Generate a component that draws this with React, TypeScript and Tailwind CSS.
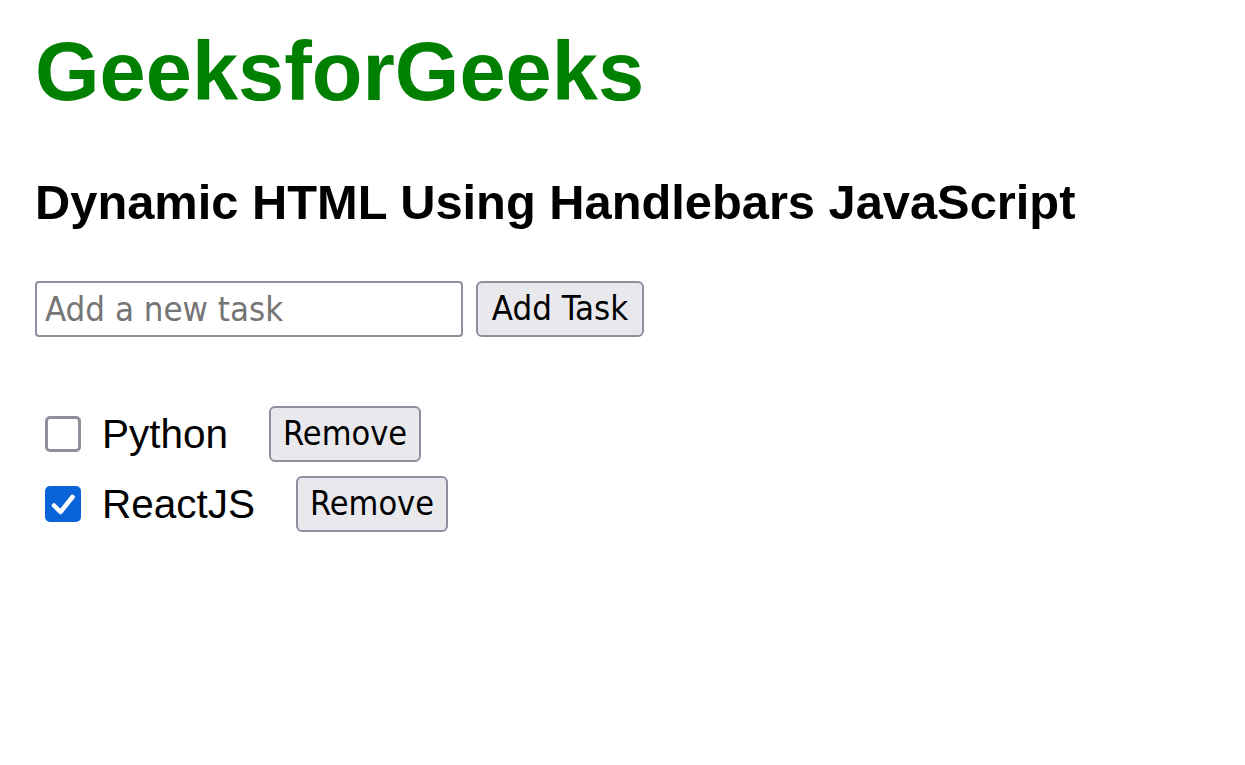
import { useState } from "react";

type Task = { id: number; text: string; done: boolean };

const START: Task[] = [
  { id: 1, text: "Python", done: false },
  { id: 2, text: "ReactJS", done: true },
];

function CheckBox({ checked, onChange }: { checked: boolean; onChange: () => void }) {
  return (
    <button
      type="button"
      onClick={onChange}
      className={
        checked
          ? "flex h-[36px] w-[36px] shrink-0 items-center justify-center rounded-[5px] bg-[#0b63d8]"
          : "h-[36px] w-[36px] shrink-0 rounded-[5px] border-[3px] border-[#8f8f9d] bg-white"
      }
    >
      {checked && (
        <svg viewBox="0 0 36 36" className="h-[36px] w-[36px]">
          <path
            d="M9 19.5 L15.5 26 L27.5 11"
            fill="none"
            stroke="white"
            strokeWidth="4.5"
            strokeLinecap="round"
            strokeLinejoin="round"
          />
        </svg>
      )}
    </button>
  );
}

export default function App() {
  const [tasks, setTasks] = useState<Task[]>(START);
  const [draft, setDraft] = useState("");

  const addTask = () => {
    if (!draft.trim()) return;
    setTasks([...tasks, { id: Date.now(), text: draft.trim(), done: false }]);
    setDraft("");
  };

  return (
    <div className="min-h-screen bg-white px-[35px] pt-[30px] font-['Liberation_Sans',Arial,sans-serif] text-black">
      <h1 className="text-[83px] font-bold leading-none text-[#008000]">GeeksforGeeks</h1>
      <h2 className="mt-[65px] text-[48.8px] font-bold leading-none">
        Dynamic HTML Using Handlebars JavaScript
      </h2>

      {/* new task form */}
      <div className="mt-[54px] flex gap-[13px] font-['DejaVu_Sans_Condensed','DejaVu_Sans',sans-serif] text-[34.5px]">
        <input
          value={draft}
          onChange={(e) => setDraft(e.target.value)}
          placeholder="Add a new task"
          className="h-[56px] w-[428px] rounded-[4px] border-2 border-[#8f8f9d] bg-white pl-[8px] outline-none placeholder:text-[#757575]"
        />
        <button
          onClick={addTask}
          className="flex h-[56px] w-[168px] items-center justify-center rounded-[6px] border-2 border-[#8f8f9d] bg-[#e9e9ed]"
        >
          Add Task
        </button>
      </div>

      {/* task list */}
      <ul className="mt-[69px] flex flex-col gap-[14px] pl-[10px]">
        {tasks.map((t) => (
          <li key={t.id} className="flex h-[56px] items-center">
            <CheckBox
              checked={t.done}
              onChange={() =>
                setTasks(tasks.map((x) => (x.id === t.id ? { ...x, done: !x.done } : x)))
              }
            />
            <span className="ml-[21px] text-[40.5px] leading-none">{t.text}</span>
            <button
              onClick={() => setTasks(tasks.filter((x) => x.id !== t.id))}
              className="ml-[41px] flex h-[56px] w-[152px] items-center justify-center rounded-[6px] border-2 border-[#8f8f9d] bg-[#e9e9ed] font-['DejaVu_Sans_Condensed','DejaVu_Sans',sans-serif] text-[34px]"
            >
              Remove
            </button>
          </li>
        ))}
      </ul>
    </div>
  );
}
